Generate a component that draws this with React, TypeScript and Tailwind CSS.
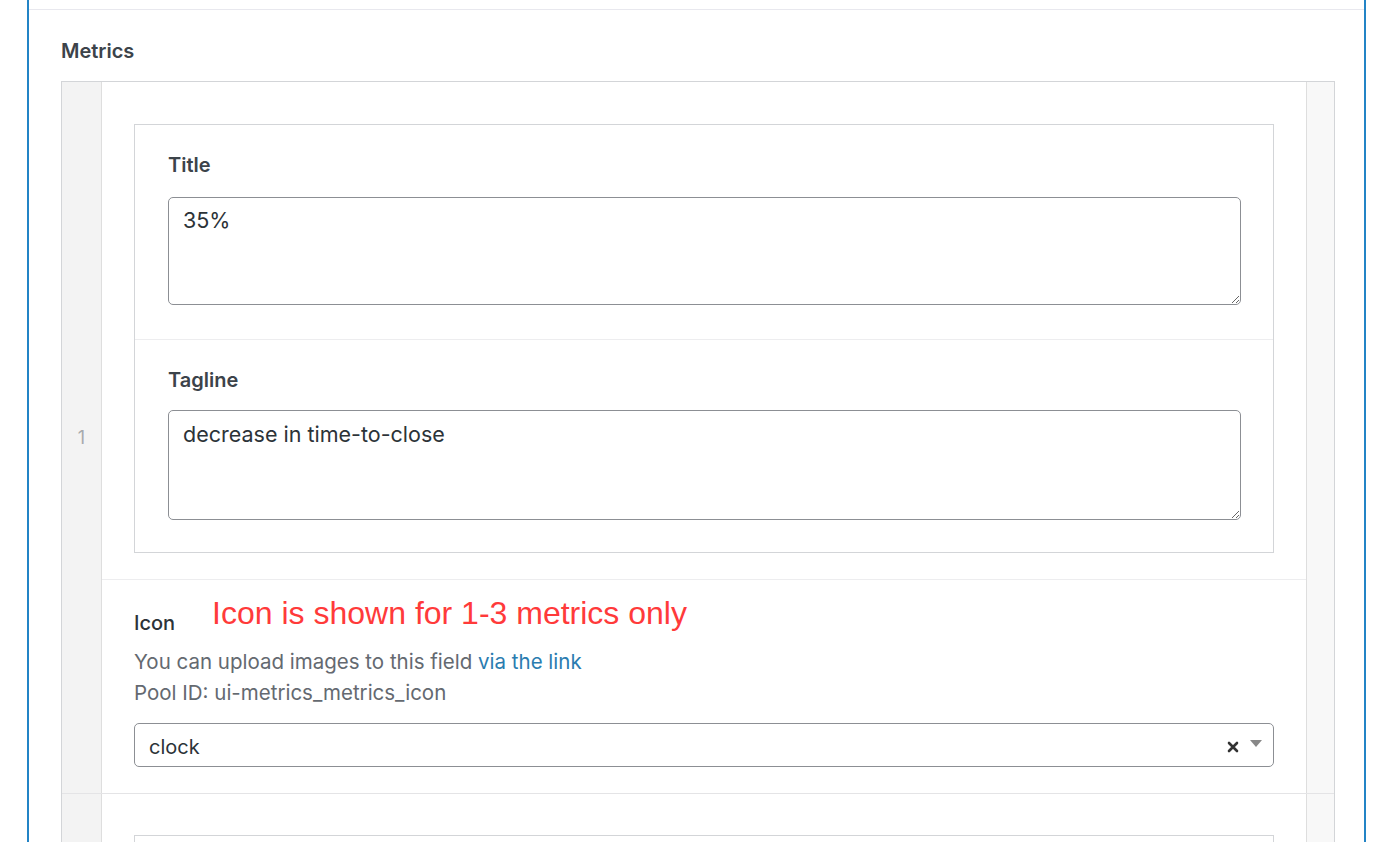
import React from "react";

const ui = { fontFamily: "Inter, 'Noto Sans', sans-serif" };
const annot = { fontFamily: "'Liberation Sans', Arial, sans-serif" };

const TextField = ({ label, value, last }: { label: string; value: string; last?: boolean }) => (
  <div className={last ? "pl-[33px] pr-8 pt-[27px] pb-[32px]" : "pl-[33px] pr-8 pt-[27px] pb-[34px] border-b border-[#ededef]"}>
    <label className="block text-[20px] leading-[27px] font-semibold text-[#3c434a]">{label}</label>
    <textarea
      defaultValue={value}
      className={
        last
          ? "mt-[16px] block w-full h-[110px] rounded-[5px] border border-[#8c8f94] px-[14px] pt-[9px] text-[21.5px] leading-[28px] text-[#2c3338] outline-none resize"
          : "mt-[18px] block w-full h-[108px] rounded-[5px] border border-[#8c8f94] px-[14px] pt-[8px] text-[21.5px] leading-[28px] text-[#2c3338] outline-none resize"
      }
      style={ui}
    />
  </div>
);

const App = () => {
  return (
    <div className="h-[842px] overflow-hidden bg-white" style={ui}>
      <div className="ml-[27px] w-[1339px] h-full border-x-2 border-[#2384c6] bg-white">
        <div className="h-[10px] border-b border-[#e8e8ee]" />
        <div className="pl-8 pr-[29px]">
          <h3 className="pt-[28px] pb-[16px] text-[20px] leading-[27px] font-semibold text-[#3c434a]">Metrics</h3>

          <div className="border border-[#d3d5d8]">
            {/* row 1 */}
            <div className="flex border-b border-[#e4e4e6]">
              <div className="w-[40px] shrink-0 flex items-center justify-center bg-[#f3f3f3] border-r border-[#dedede] text-[18px] text-[#a7aaad]">
                1
              </div>
              <div className="flex-1 min-w-0">
                <div className="px-8 pt-[42px] pb-[26px] border-b border-[#ededef]">
                  <div className="border border-[#d3d5d8]">
                    <TextField label="Title" value="35%" />
                    <TextField label="Tagline" value="decrease in time-to-close" last />
                  </div>
                </div>
                <div className="px-8 pt-[15px] pb-[26px]">
                  <div className="flex items-end gap-[37px]">
                    <span className="text-[20px] leading-[27px] font-medium text-[#2c3338] mb-[1px]">Icon</span>
                    <span className="text-[32px] leading-[36px] text-[#ff3a3a] mb-[7px]" style={annot}>
                      Icon is shown for 1-3 metrics only
                    </span>
                  </div>
                  <p className="mt-[8px] text-[20.5px] leading-[31px] text-[#646970]">
                    You can upload images to this field <a className="text-[#2a7cb0]">via the link</a>
                  </p>
                  <p className="text-[20.5px] leading-[31px] text-[#646970]">Pool ID: ui-metrics_metrics_icon</p>
                  <div className="mt-[15px] h-[44px] flex items-center rounded-[5px] border border-[#8c8f94] pl-[14px] pr-[11px]">
                    <span className="flex-1 pt-[3px] text-[20px] text-[#2c3338]">clock</span>
                    <svg width="12" height="12" viewBox="0 0 12 12" className="mr-[11px] mt-[4px]">
                      <path d="M2 2 L10 10 M10 2 L2 10" stroke="#333" strokeWidth="2.6" strokeLinecap="round" />
                    </svg>
                    <svg width="12" height="8" viewBox="0 0 12 8" className="mb-[3px]">
                      <path d="M0 0 H12 L6 7 Z" fill="#888" />
                    </svg>
                  </div>
                </div>
              </div>
              <div className="w-[28px] shrink-0 bg-[#f8f8f8] border-l border-[#dedede]" />
            </div>
            {/* row 2 */}
            <div className="flex h-[400px]">
              <div className="w-[40px] shrink-0 bg-[#f3f3f3] border-r border-[#dedede]" />
              <div className="flex-1 min-w-0 px-8 pt-[41px]">
                <div className="h-[300px] border border-[#d3d5d8]" />
              </div>
              <div className="w-[28px] shrink-0 bg-[#f8f8f8] border-l border-[#dedede]" />
            </div>
          </div>
        </div>
      </div>
    </div>
  );
};

export default App;
